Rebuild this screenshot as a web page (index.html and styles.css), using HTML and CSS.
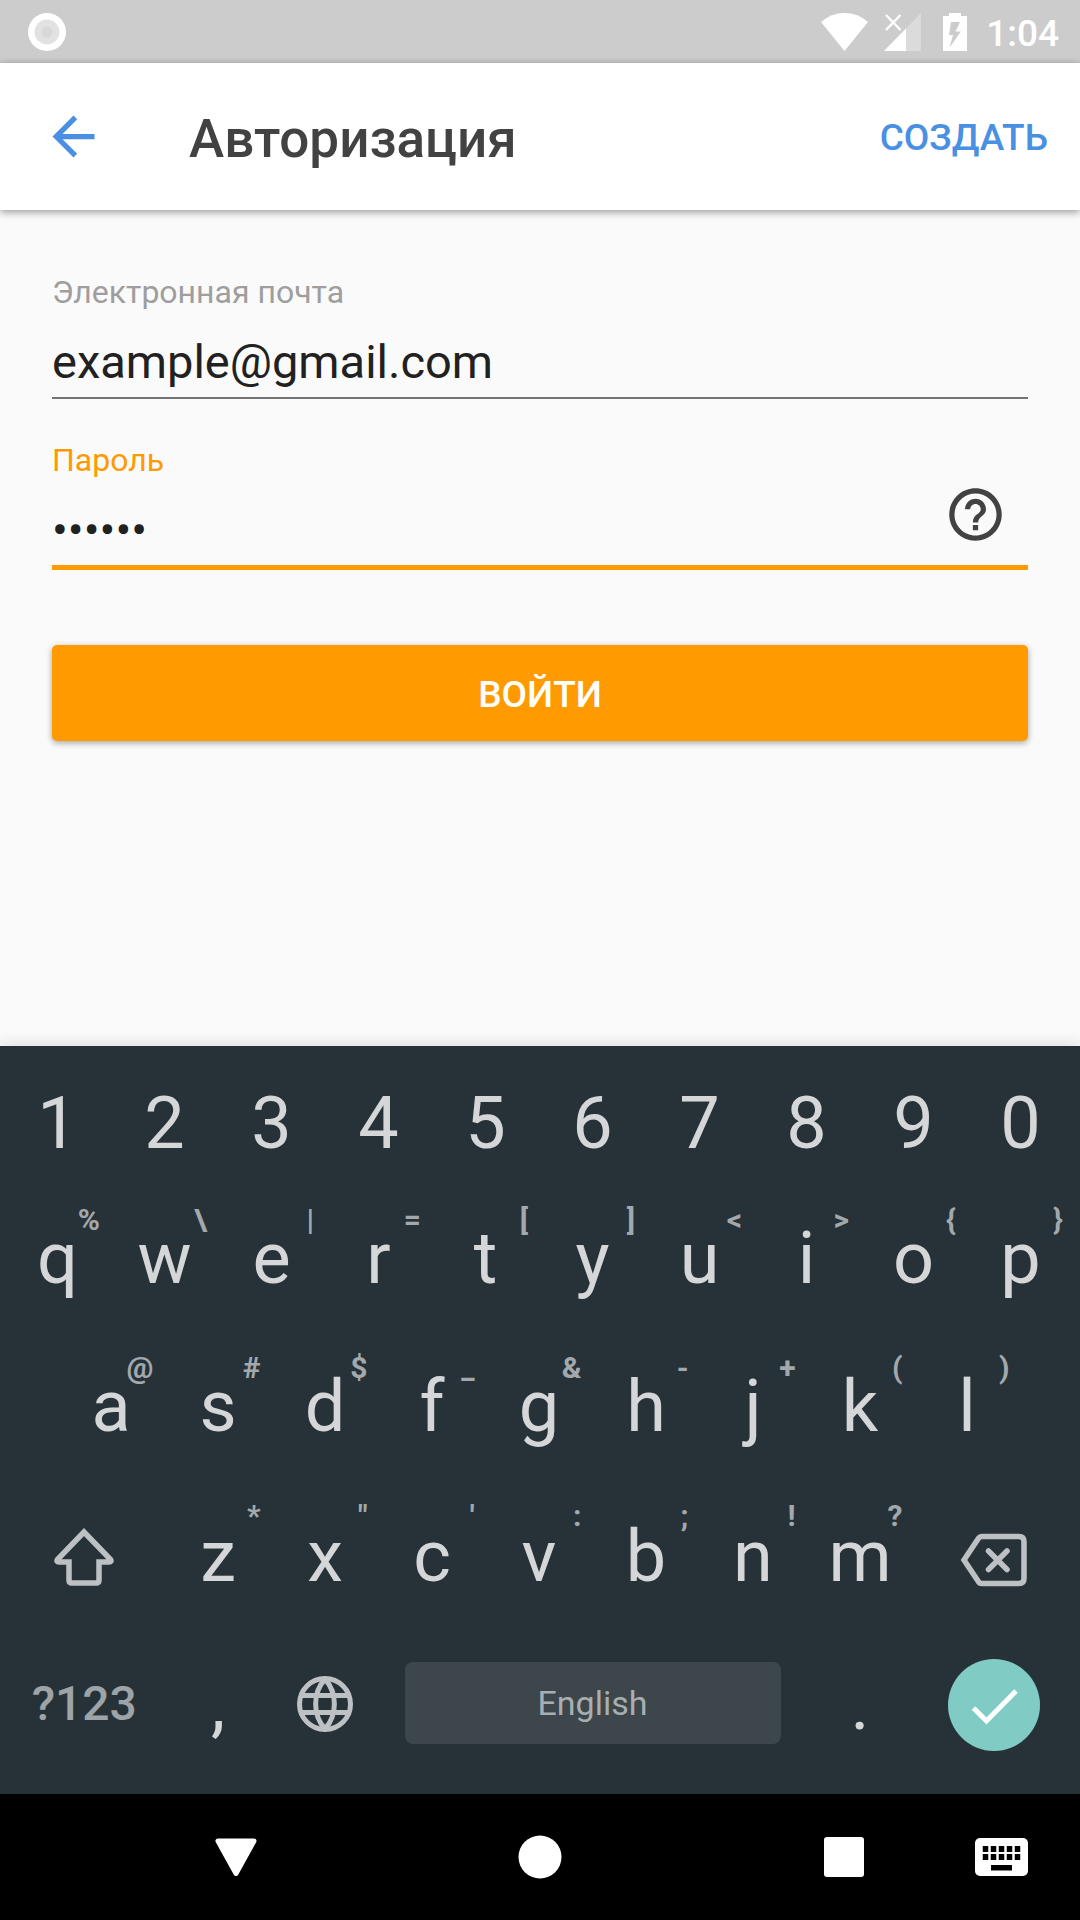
FILE: index.html
```html
<!DOCTYPE html>
<html lang="ru">
<head>
<meta charset="utf-8">
<meta name="viewport" content="width=device-width, initial-scale=1">
<title>Авторизация</title>
<link rel="stylesheet" href="styles.css">
</head>
<body>
<div class="screen">
  <div class="status">
    <svg class="status-dot" viewBox="0 0 38 38" aria-hidden="true"><circle cx="19" cy="19" r="19" fill="#fff"/><circle cx="19" cy="19" r="12.5" fill="#e2e2e2"/><circle cx="19" cy="19" r="5.5" fill="#d8d8d8"/></svg>
    <svg class="status-wifi" viewBox="0 0 47 38" aria-hidden="true"><path d="M0 9Q10 0 23.500 0T47 9L23.500 38z" fill="#fff"/></svg>
    <svg class="status-cell" viewBox="0 0 37 38" aria-hidden="true"><path d="M37 0v38H0z" fill="#fff" opacity=".3"/><path d="M22 15.500V38H0z" fill="#fff"/><path d="M2 2l14.500 15M16.500 2L2 17" stroke="#fff" stroke-width="2.400" fill="none"/></svg>
    <svg class="status-battery" viewBox="0 0 24 38" aria-hidden="true"><path fill-rule="evenodd" d="M6 0h12v3h6v35H0V3h6zM8 9L6 22h4L6.500 34.500 18 18.500h-5.500L17 9z" fill="#fff"/></svg>
    <span class="status-time">1:04</span>
  </div>

  <header class="appbar">
    <button class="icon-button" type="button" aria-label="Назад">
      <svg class="icon" viewBox="0 0 24 24" aria-hidden="true"><path d="M20 11H7.830l5.590-5.590L12 4l-8 8 8 8 1.410-1.410L7.830 13H20v-2z" fill="#4a90e2"/></svg>
    </button>
    <h1 class="title">Авторизация</h1>
    <a class="create" href="#">СОЗДАТЬ</a>
  </header>

  <main class="content">
    <form class="form">
      <div class="field">
        <label class="label" for="email">Электронная почта</label>
        <div class="control">
          <input class="input" id="email" type="email" value="example@gmail.com">
        </div>
      </div>
      <div class="field field-active">
        <label class="label" for="password">Пароль</label>
        <div class="control">
          <input class="input" id="password" type="password" value="secret">
          <button class="icon-button help" type="button" aria-label="Забыли пароль?">
            <svg class="icon" viewBox="0 0 24 24" aria-hidden="true"><path d="M11 18h2v-2h-2v2zm1-16C6.480 2 2 6.480 2 12s4.480 10 10 10 10-4.480 10-10S17.520 2 12 2zm0 18c-4.410 0-8-3.590-8-8s3.590-8 8-8 8 3.590 8 8-3.590 8-8 8zm0-14c-2.210 0-4 1.790-4 4h2c0-1.100.9-2 2-2s2 .9 2 2c0 2-3 1.750-3 5h2c0-2.250 3-2.500 3-5 0-2.210-1.790-4-4-4z" fill="#424242"/></svg>
          </button>
        </div>
      </div>
      <button class="submit" type="button">ВОЙТИ</button>
    </form>
  </main>

  <section class="keyboard" aria-label="Клавиатура">
    <div class="row row-digits">
      <button class="key">1</button><button class="key">2</button><button class="key">3</button><button class="key">4</button><button class="key">5</button><button class="key">6</button><button class="key">7</button><button class="key">8</button><button class="key">9</button><button class="key">0</button>
    </div>
    <div class="row">
      <button class="key">q<span class="hint">%</span></button>
      <button class="key">w<span class="hint">\</span></button>
      <button class="key">e<span class="hint">|</span></button>
      <button class="key">r<span class="hint">=</span></button>
      <button class="key">t<span class="hint">[</span></button>
      <button class="key">y<span class="hint">]</span></button>
      <button class="key">u<span class="hint">&lt;</span></button>
      <button class="key">i<span class="hint">&gt;</span></button>
      <button class="key">o<span class="hint">{</span></button>
      <button class="key">p<span class="hint">}</span></button>
    </div>
    <div class="row row-inset">
      <button class="key">a<span class="hint">@</span></button>
      <button class="key">s<span class="hint">#</span></button>
      <button class="key">d<span class="hint">$</span></button>
      <button class="key">f<span class="hint">_</span></button>
      <button class="key">g<span class="hint">&amp;</span></button>
      <button class="key">h<span class="hint">-</span></button>
      <button class="key">j<span class="hint">+</span></button>
      <button class="key">k<span class="hint">(</span></button>
      <button class="key">l<span class="hint">)</span></button>
    </div>
    <div class="row row-letters-last">
      <button class="key key-wide" aria-label="Shift">
        <svg class="key-shift" viewBox="0 0 60 58" aria-hidden="true"><path d="M30 4L3.500 31.500Q2 34 5 34H15V52Q15 55 18 55H42Q45 55 45 52V34H55Q58 34 56.500 31.500z" fill="none" stroke="#bdc1c4" stroke-width="5.500"/></svg>
      </button>
      <button class="key">z<span class="hint">*</span></button>
      <button class="key">x<span class="hint">"</span></button>
      <button class="key">c<span class="hint">'</span></button>
      <button class="key">v<span class="hint">:</span></button>
      <button class="key">b<span class="hint">;</span></button>
      <button class="key">n<span class="hint">!</span></button>
      <button class="key">m<span class="hint">?</span></button>
      <button class="key key-wide key-lower" aria-label="Backspace">
        <svg class="key-delete" viewBox="0 0 68 54" aria-hidden="true"><g fill="none" stroke="#bdc1c4" stroke-width="5.500"><path d="M22 3.500H59Q64 3.500 64 8.500V45.500Q64 50.500 59 50.500H22Q19.500 50.500 18 48L4 27 18 6Q19.500 3.500 22 3.500z"/><path d="M28.500 18L47 36.500M47 18L28.500 36.500" stroke-linecap="round"/></g></svg>
      </button>
    </div>
    <div class="row row-bottom">
      <button class="key key-wide key-symbols">?123</button>
      <button class="key key-low">,</button>
      <button class="key" aria-label="Language">
        <svg class="key-globe" viewBox="0 0 56 56" aria-hidden="true"><g fill="none" stroke="#bdc1c4" stroke-width="5"><circle cx="28" cy="28" r="25.500"/><path d="M5.500 19.500H50.500M5.500 36.500H50.500"/><path d="M28 3C15.500 17 15.500 39 28 53 40.500 39 40.500 17 28 3z"/></g></svg>
      </button>
      <button class="key key-space"><span class="space-face">English</span></button>
      <button class="key key-low">.</button>
      <button class="key key-wide key-low" aria-label="Enter">
        <svg class="key-enter" viewBox="0 0 92 92" aria-hidden="true"><circle cx="46" cy="46" r="46" fill="#80cbc4"/><path d="M25.500 49L38.500 62L68 32" fill="none" stroke="#fff" stroke-width="5"/></svg>
      </button>
    </div>
  </section>

  <nav class="navbar">
    <button class="nav-button nav-back" aria-label="Back"><svg class="nav-icon" viewBox="0 0 44 44" aria-hidden="true"><path d="M4 6H40L22 38.500z" fill="#fff" stroke="#fff" stroke-width="5" stroke-linejoin="round"/></svg></button>
    <button class="nav-button nav-home" aria-label="Home"><svg class="nav-icon" viewBox="0 0 44 44" aria-hidden="true"><circle cx="22" cy="22" r="21.500" fill="#fff"/></svg></button>
    <button class="nav-button nav-recent" aria-label="Recent"><svg class="nav-icon" viewBox="0 0 44 44" aria-hidden="true"><rect x="2" y="2" width="40" height="40" rx="3" fill="#fff"/></svg></button>
    <button class="nav-button nav-keyboard" aria-label="Keyboard"><svg class="nav-keys" viewBox="0 0 54 38" aria-hidden="true"><rect x="1" width="53" height="38" rx="5" fill="#fff"/><path d="M11.500 8v14M19.500 8v14M27.500 8v14M35.500 8v14M43.500 8v14" fill="none" stroke="#000" stroke-width="5.500" stroke-dasharray="6 2"/><path d="M17 27h21v5.500H17z"/></svg></button>
  </nav>
</div>
</body>
</html>
```
FILE: styles.css
```css
* { box-sizing: border-box; }

body {
  margin: 0;
  background: #fafafa;
  font-family: Roboto, "Liberation Sans", sans-serif;
}

button, input {
  margin: 0;
  padding: 0;
  border: 0;
  background: none;
  color: inherit;
  font: inherit;
}

svg { display: block; }

.screen {
  display: flex;
  flex-direction: column;
  min-height: 100vh;
}

/* System status bar */
.status {
  display: flex;
  align-items: center;
  height: 63px;
  padding: 0 21px 0 28px;
  background: #ccc;
  color: #fff;
}
.status-dot { width: 38px; height: 38px; margin-right: auto; }
.status-wifi { width: 47px; height: 38px; margin-right: 16px; }
.status-cell { width: 37px; height: 38px; margin-right: 22px; }
.status-battery { width: 24px; height: 38px; margin-right: 19px; }
.status-time { font-size: 37px; font-weight: 500; line-height: 40px; padding-top: 4px; }

/* App bar */
.appbar {
  display: flex;
  align-items: center;
  height: 147px;
  padding: 0 32px 0 42px;
  background: #fff;
  box-shadow: 0 2px 8px rgba(0, 0, 0, .4);
}
.icon-button { width: 63px; height: 63px; }
.icon { width: 63px; height: 63px; }
.title {
  flex: 1;
  margin: 0 0 0 84px;
  padding-top: 4px;
  color: #424242;
  font-size: 53px;
  font-weight: 500;
  line-height: 64px;
}
.create {
  padding-top: 2px;
  color: #4a90e2;
  font-size: 37px;
  font-weight: 500;
  line-height: 40px;
  text-decoration: none;
}

/* Sign-in form */
.content { flex: 1; padding: 64px 52px; }
.form { display: flex; flex-direction: column; }
.field { display: flex; flex-direction: column; gap: 16px; }
.label { color: #9e9e9e; font-size: 32px; line-height: 36px; }
.control { position: relative; border-bottom: 2px solid #757575; }
.input {
  display: block;
  width: 100%;
  height: 71px;
  color: #212121;
  font-size: 47px;
  outline: none;
}
.field-active { margin-top: 43px; }
.field-active .label { color: #ff9b00; }
.field-active .control { border-bottom: 5px solid #ff9b00; }
.help { position: absolute; right: 21px; bottom: 19px; }
.submit {
  height: 96px;
  margin-top: 75px;
  padding-top: 2px;
  border-radius: 5px;
  background: #ff9b00;
  box-shadow: 0 2px 6px rgba(0, 0, 0, .35);
  color: #fff;
  font-size: 37px;
  font-weight: 500;
}

/* On-screen keyboard */
.keyboard {
  padding: 16px 6px 16px 4px;
  background: #263238;
  box-shadow: 0 0 16px rgba(0, 0, 0, .15);
  color: #d4d6d7;
}
.row { display: grid; grid-template-columns: repeat(20, 1fr); height: 148px; }
.row-digits { height: 122px; }
.row-bottom { height: 150px; }
.row-inset .key:first-child { grid-column: 2 / span 2; }
.key {
  position: relative;
  display: flex;
  align-items: center;
  justify-content: center;
  grid-column: span 2;
  min-width: 0;
  padding-top: 2px;
  font-size: 72px;
  line-height: 84px;
}
.row-letters-last .key { padding-top: 5px; }
.row-letters-last .key-lower { padding-top: 11px; }
.key-wide { grid-column: span 3; }
.key-space { grid-column: span 8; padding-top: 0; }
.key-low { padding-top: 4px; }
.hint {
  position: absolute;
  top: 21px;
  right: 11px;
  color: #a2a8ab;
  font-size: 30px;
  font-weight: 700;
  line-height: 30px;
}
.key-shift { width: 60px; height: 58px; }
.key-delete { width: 68px; height: 54px; }
.key-globe { width: 56px; height: 56px; }
.key-enter { width: 92px; height: 92px; }
.key-symbols { color: #9da3a6; font-size: 48px; font-weight: 500; }
.space-face {
  flex: 1;
  margin: 0 26px;
  border-radius: 8px;
  background: #3c464b;
  color: #a9aeb1;
  font-size: 34px;
  line-height: 82px;
}

/* System navigation bar */
.navbar {
  display: grid;
  grid-template-columns: 214fr 44px 260fr 44px 260fr 44px 108fr 54px 52fr;
  align-items: center;
  height: 126px;
  background: #000;
}
.nav-back { grid-column: 2; }
.nav-home { grid-column: 4; }
.nav-recent { grid-column: 6; }
.nav-keyboard { grid-column: 8; }
.nav-icon { width: 44px; height: 44px; }
.nav-keys { width: 54px; height: 38px; }
```
